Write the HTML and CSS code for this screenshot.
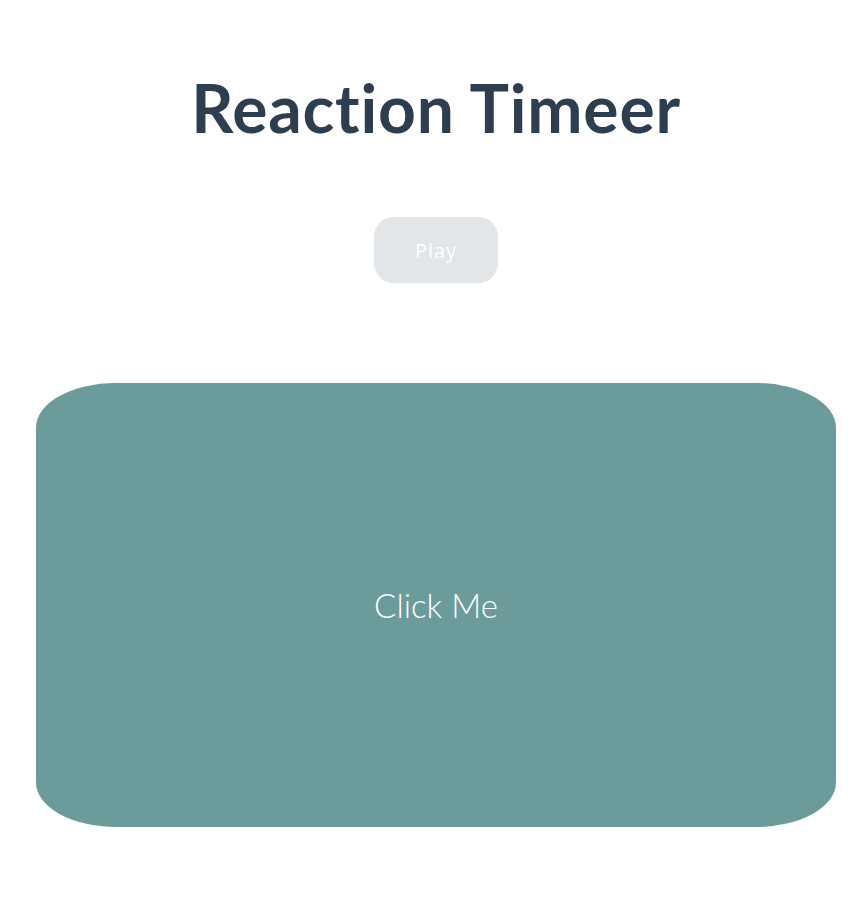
FILE: index.html
```html
<!DOCTYPE html>
<html>
<head>
<meta charset="utf-8">
<link rel="stylesheet" href="styles.css">
</head>
<body>
<div class="app">
  <h1 class="title">Reaction Timeer</h1>
  <div class="controls">
    <button class="play" disabled>Play</button>
  </div>
  <div class="block">Click Me</div>
</div>
</body>
</html>
```
FILE: styles.css
```css
html, body {
  margin: 0;
  padding: 0;
  background: #ffffff;
}
.app {
  font-family: Lato, "Liberation Sans", sans-serif;
  color: #2c3e50;
  text-align: center;
  display: flex;
  flex-direction: column;
  align-items: center;
  padding-top: 68px;
  padding-left: 8px;
}
.title {
  margin: 0;
  font-size: 66px;
  font-weight: 700;
  line-height: 80px;
  letter-spacing: 0.8px;
}
.controls {
  margin-top: 69px;
}
.play {
  width: 124px;
  height: 66px;
  border: none;
  border-radius: 20px;
  background: #e2e6e9;
  color: #ffffff;
  font-family: "Open Sans", "Liberation Sans", sans-serif;
  font-size: 20px;
  letter-spacing: 1px;
}
.block {
  margin-top: 100px;
  width: 800px;
  height: 444px;
  border-radius: 10%;
  background: #6c9b9c;
  color: #ffffff;
  font-size: 33px;
  font-weight: 300;
  display: flex;
  align-items: center;
  justify-content: center;
}
```
